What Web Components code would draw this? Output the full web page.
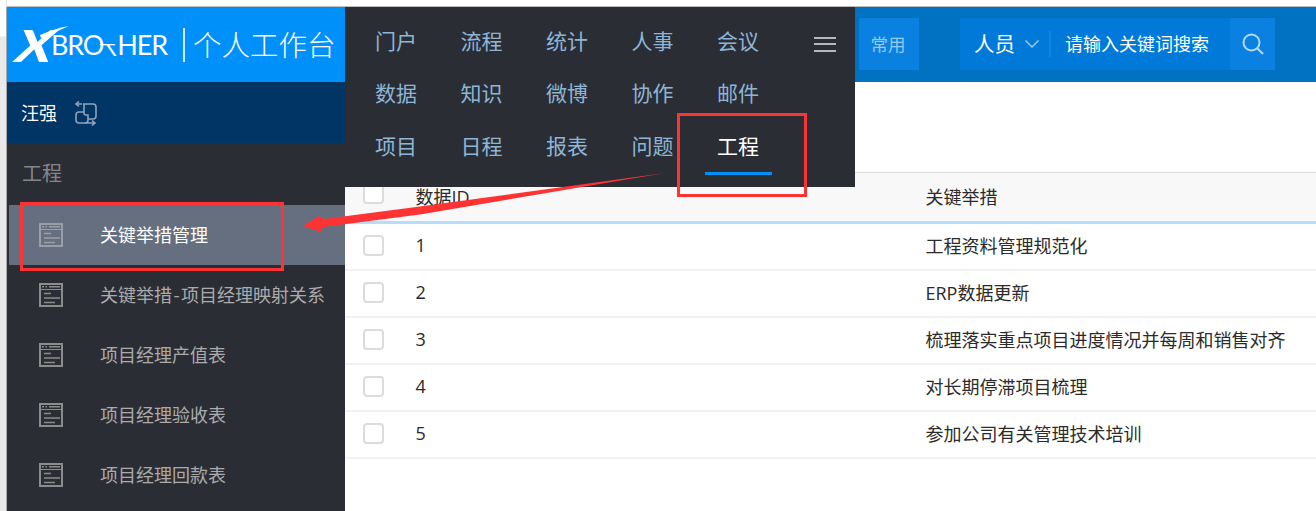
<!DOCTYPE html>
<html lang="zh">
<head>
<meta charset="utf-8">
<title>个人工作台</title>
<style>
    html, body {
        margin: 0;
        padding: 0;
        height: 511px;
        overflow: hidden;
        background: #fff;
        font-family: "Open Sans", "Noto Sans CJK SC", sans-serif;
    }
</style>
</head>
<body>
<app-shell>
    <side-bar slot="side">
        <side-item active>关键举措管理</side-item>
        <side-item>关键举措<span style="padding:0 1.4px">-</span>项目经理映射关系</side-item>
        <side-item>项目经理产值表</side-item>
        <side-item>项目经理验收表</side-item>
        <side-item>项目经理回款表</side-item>
    </side-bar>
    <top-bar slot="top"></top-bar>
    <data-table slot="main">
        <table-row head num="数据ID">关键举措</table-row>
        <table-row num="1">工程资料管理规范化</table-row>
        <table-row num="2">ERP数据更新</table-row>
        <table-row num="3">梳理落实重点项目进度情况并每周和销售对齐</table-row>
        <table-row num="4">对长期停滞项目梳理</table-row>
        <table-row num="5">参加公司有关管理技术培训</table-row>
    </data-table>
</app-shell>
<mark-layer></mark-layer>

<script>
class AppShell extends HTMLElement {
    constructor() {
        super()
        this.shadowDOM = this.attachShadow({mode: "open"})
    }

    connectedCallback() {
        this.shadowDOM.innerHTML = `
            <style>
                :host {
                    display: grid;
                    grid-template-columns: 7px 1fr;
                    grid-template-rows: 7px 504px;
                    width: 1316px;
                    height: 511px;
                }
                .corner { background: #fff; }
                .top-line {
                    background: #fff;
                    border-bottom: 1px solid #bdbdbd;
                    box-sizing: border-box;
                }
                .gutter {
                    background: linear-gradient(#fff 0, #fff 29px, #f3f3f3 29px, #f3f3f3 30px, #e9e9e9 30px);
                    border-right: 1px solid #a8a8a8;
                    box-sizing: border-box;
                }
                .corner { border-right: 1px solid #e4e4e4; box-sizing: border-box; }
                .work {
                    display: grid;
                    grid-template-columns: 338px 1fr;
                    overflow: hidden;
                    min-width: 0;
                }
                .right {
                    display: flex;
                    flex-direction: column;
                    min-width: 0;
                }
            </style>
            <div class="corner"></div>
            <div class="top-line"></div>
            <div class="gutter"></div>
            <div class="work">
                <slot name="side"></slot>
                <div class="right">
                    <slot name="top"></slot>
                    <slot name="main"></slot>
                </div>
            </div>
        `;
    }
}

class SideBar extends HTMLElement {
    constructor() {
        super()
        this.shadowDOM = this.attachShadow({mode: "open"})
    }

    connectedCallback() {
        this.shadowDOM.innerHTML = `
            <style>
                :host {
                    display: block;
                    background: #2b2d35;
                    height: 504px;
                    overflow: hidden;
                }
                .logo {
                    display: flex;
                    align-items: center;
                    height: 75px;
                    padding-left: 8px;
                    background: #0090fa;
                    color: #fff;
                }
                .brand {
                    position: relative;
                    display: flex;
                    align-items: center;
                    width: 168px;
                    height: 40px;
                    font-family: Lato, sans-serif;
                    font-weight: 400;
                    font-size: 27px;
                    letter-spacing: -1.2px;
                    white-space: nowrap;
                }
                .brand .x {
                    display: inline-block;
                    width: 33px;
                    margin-left: 3px;
                    font-size: 44px;
                    font-weight: 900;
                    line-height: 40px;
                    letter-spacing: 0;
                    transform-origin: left center;
                    transform: scaleX(1.2) skewX(-16deg);
                }
                .brand .t {
                    display: inline-block;
                    font-size: 26px;
                    transform: translateY(4px) scaleY(.65) skewX(24deg);
                }
                .brand svg {
                    position: absolute;
                    left: 24px;
                    top: 0;
                }
                .sep {
                    width: 2px;
                    height: 34px;
                    background: #cfe9fe;
                }
                .title {
                    margin: -2px 0 0 8px;
                    font-size: 28.5px;
                    font-weight: 300;
                    line-height: 40px;
                    white-space: nowrap;
                    font-family: "Noto Sans CJK SC", sans-serif;
                }
                .user {
                    display: flex;
                    align-items: center;
                    height: 61px;
                    padding-left: 14px;
                    background: #003566;
                    color: #fff;
                    font-size: 18px;
                    font-family: "Noto Sans CJK SC", sans-serif;
                }
                .user span { margin-top: -2px; }
                .user svg { margin-left: 18px; margin-top: 2px; }
                .group {
                    display: flex;
                    align-items: center;
                    height: 62px;
                    padding: 0 0 4px 15px;
                    color: #85868b;
                    font-size: 20px;
                    font-family: "Noto Sans CJK SC", sans-serif;
                    box-sizing: border-box;
                }
            </style>
            <div class="logo">
                <div class="brand">
                    <svg width="30" height="14" viewBox="0 0 30 14"><path d="M2 13 Q14 8 30 1 Q18 3 1 10Z" fill="#fff"/></svg>
                    <span class="x">X</span><span>BRO</span><span class="t">T</span><span>HER</span>
                </div>
                <div class="sep"></div>
                <div class="title">个人工作台</div>
            </div>
            <div class="user">
                <span>汪强</span>
                <svg width="22" height="25" viewBox="0 0 22 25" fill="none" stroke="#8fa3ba" stroke-width="1.6">
                    <path d="M8 3h10q3 0 3 3v9q0 3-3 3h-5"/>
                    <path d="M9 3v9q0 2 2 2h2v5q0 3-3 3H4q-3 0-3-3v-5q0-3 3-3h5"/>
                    <path d="M4 0.5 1 3l3 2.5M7 3H2"/>
                    <path d="M17 19.5l3 2.5-3 2.5M10 22h9"/>
                </svg>
            </div>
            <div class="group">工程</div>
            <slot></slot>
        `;
    }
}

class SideItem extends HTMLElement {
    constructor() {
        super()
        this.shadowDOM = this.attachShadow({mode: "open"})
    }

    connectedCallback() {
        this.shadowDOM.innerHTML = `
            <style>
                :host {
                    display: flex;
                    align-items: center;
                    height: 60px;
                    margin-left: 2px;
                    padding-left: 30px;
                    color: #ababab;
                    font-size: 18px;
                    white-space: nowrap;
                    font-family: "Noto Sans CJK SC", sans-serif;
                }
                :host([active]) {
                    background: #666f80;
                    color: #fff;
                }
                svg {
                    flex: none;
                    margin-right: 37px;
                    stroke: #8c8c8c;
                }
                :host([active]) svg { stroke: #9a9ea6; }
                .label { margin-top: -2px; }
            </style>
            <svg width="24" height="24" viewBox="0 0 24 24" fill="none" stroke-width="2">
                <rect x="1" y="1" width="22" height="22"/>
                <path d="M1 6.5h22" stroke-width="1"/>
                <path d="M3 3.8h2M6.5 3.8h1.5M10 3.8h11" stroke-width="1.6"/>
                <path d="M5 10.5h7M5 15h16M5 19.5h11" stroke-width="1.6"/>
            </svg>
            <span class="label"><slot></slot></span>
        `;
    }
}

class TopBar extends HTMLElement {
    constructor() {
        super()
        this.shadowDOM = this.attachShadow({mode: "open"})
    }

    connectedCallback() {
        this.shadowDOM.innerHTML = `
            <style>
                :host {
                    display: flex;
                    align-items: flex-start;
                    height: 75px;
                    background: #0072c1;
                    flex: none;
                    font-family: "Noto Sans CJK SC", sans-serif;
                }
                .spacer {
                    position: relative;
                    width: 510px;
                    height: 75px;
                    flex: none;
                }
                .common {
                    display: flex;
                    align-items: center;
                    justify-content: center;
                    box-sizing: border-box;
                    width: 60px;
                    height: 52px;
                    margin: 11px 0 0 4px;
                    padding: 0 2px 2px 0;
                    background: #0a80e0;
                    color: #93cbf5;
                    font-size: 17.5px;
                }
                search-box { margin: 11px 0 0 41px; }
            </style>
            <div class="spacer"><menu-panel></menu-panel></div>
            <div class="common">常用</div>
            <search-box></search-box>
        `;
    }
}

class MenuPanel extends HTMLElement {
    constructor() {
        super()
        this.shadowDOM = this.attachShadow({mode: "open"})
    }

    connectedCallback() {
        const names = ["门户", "流程", "统计", "人事", "会议", "数据", "知识", "微博", "协作", "邮件", "项目", "日程", "报表", "问题", "工程"];
        const items = names.map(n => `<div class="item${n === "工程" ? " on" : ""}">${n}</div>`).join("");
        this.shadowDOM.innerHTML = `
            <style>
                :host {
                    position: absolute;
                    left: 0;
                    top: 0;
                    z-index: 5;
                    display: block;
                    width: 510px;
                    height: 180px;
                    box-sizing: border-box;
                    padding: 7.5px 0 0 8.25px;
                    background: #2b2d35;
                }
                .grid {
                    display: grid;
                    grid-template-columns: repeat(5, 85.5px);
                    grid-auto-rows: 52.5px;
                }
                .item {
                    position: relative;
                    display: flex;
                    align-items: center;
                    justify-content: center;
                    padding-bottom: 2px;
                    box-sizing: border-box;
                    color: #8db6d6;
                    font-size: 21px;
                }
                .on { color: #fff; }
                .on::after {
                    content: "";
                    position: absolute;
                    left: 9.5px;
                    top: 52.5px;
                    width: 67px;
                    height: 3px;
                    background: #0090fa;
                }
                .burger {
                    position: absolute;
                    left: 469px;
                    top: 30px;
                    width: 22px;
                    height: 15px;
                    background: linear-gradient(#b4b7bc 0 2px, transparent 2px 6.5px, #b4b7bc 6.5px 8.5px, transparent 8.5px 13px, #b4b7bc 13px 15px);
                }
            </style>
            <div class="grid">${items}</div>
            <div class="burger"></div>
        `;
    }
}

class SearchBox extends HTMLElement {
    constructor() {
        super()
        this.shadowDOM = this.attachShadow({mode: "open"})
    }

    connectedCallback() {
        this.shadowDOM.innerHTML = `
            <style>
                :host {
                    display: flex;
                    align-items: stretch;
                    height: 52px;
                    color: #fff;
                }
                .field {
                    display: flex;
                    align-items: center;
                    width: 270px;
                    padding-left: 14px;
                    box-sizing: border-box;
                    background: #0079d8;
                    white-space: nowrap;
                }
                .kind { font-size: 20.5px; margin-top: -2px; }
                .chev { margin-left: 10px; }
                .div {
                    width: 2px;
                    height: 26px;
                    margin: 0 14px 0 10px;
                    background: #0a86ea;
                }
                .hint { font-size: 18px; margin-top: -2px; }
                .btn {
                    display: flex;
                    align-items: center;
                    justify-content: center;
                    width: 45px;
                    background: #0a80e0;
                }
            </style>
            <div class="field">
                <span class="kind">人员</span>
                <svg class="chev" width="14" height="8" viewBox="0 0 14 8" fill="none" stroke="#9fd0f6" stroke-width="1.4"><path d="M0.5 0.5 7 7l6.5-6.5"/></svg>
                <div class="div"></div>
                <span class="hint">请输入关键词搜索</span>
            </div>
            <div class="btn">
                <svg width="22" height="22" viewBox="0 0 22 22" fill="none" stroke="#b3dbf9" stroke-width="2"><circle cx="9.5" cy="9.5" r="8"/><path d="M15.5 15.5 21 21"/></svg>
            </div>
        `;
    }
}

class DataTable extends HTMLElement {
    constructor() {
        super()
        this.shadowDOM = this.attachShadow({mode: "open"})
    }

    connectedCallback() {
        this.shadowDOM.innerHTML = `
            <style>
                :host {
                    display: block;
                    flex: 1;
                    padding-top: 90px;
                    background: #fff;
                    color: #333;
                    font-size: 18px;
                }
            </style>
            <slot></slot>
        `;
    }
}

class TableRow extends HTMLElement {
    constructor() {
        super()
        this.shadowDOM = this.attachShadow({mode: "open"})
    }

    connectedCallback() {
        this.shadowDOM.innerHTML = `
            <style>
                :host {
                    display: grid;
                    grid-template-columns: 52.5px 510px 1fr;
                    align-items: center;
                    box-sizing: border-box;
                    height: 47px;
                    padding-left: 18px;
                    border-bottom: 2px solid #f2f2f2;
                    white-space: nowrap;
                    font-family: "Open Sans", "Noto Sans CJK SC", sans-serif;
                }
                :host([head]) {
                    height: 52px;
                    background: #f8f8f8;
                    border-top: 1px solid #dcdcdc;
                    border-bottom: 3px solid #b5dcf9;
                }
                .box {
                    width: 21px;
                    height: 21px;
                    box-sizing: border-box;
                    border: 2px solid #dcdcdc;
                    border-radius: 4px;
                    background: #fff;
                    margin-top: -2px;
                }
                :host([head]) .box { margin-top: -8px; }
                .cell { margin-top: -3px; color: #2b2b2b; }
                :host([head]) .cell { margin-top: -2px; }
            </style>
            <div class="box"></div>
            <div class="cell">${this.getAttribute("num")}</div>
            <div class="cell"><slot></slot></div>
        `;
    }
}

class MarkLayer extends HTMLElement {
    constructor() {
        super()
        this.shadowDOM = this.attachShadow({mode: "open"})
    }

    connectedCallback() {
        this.shadowDOM.innerHTML = `
            <style>
                :host {
                    position: absolute;
                    left: 0;
                    top: 0;
                    z-index: 10;
                    display: block;
                    width: 1316px;
                    height: 511px;
                    pointer-events: none;
                }
            </style>
            <svg width="1316" height="511" viewBox="0 0 1316 511" fill="none">
                <rect x="21.5" y="203.5" width="261" height="66" stroke="#ff3333" stroke-width="3"/>
                <rect x="678.5" y="114.5" width="127" height="81" stroke="#ff3333" stroke-width="3"/>
                <polygon points="665,173 420,206.5 324,219 319,216 303,226 321,232 323,227 420,214.5" fill="#ff3333"/>
            </svg>
        `;
    }
}

customElements.define('app-shell', AppShell);
customElements.define('side-bar', SideBar);
customElements.define('side-item', SideItem);
customElements.define('top-bar', TopBar);
customElements.define('menu-panel', MenuPanel);
customElements.define('search-box', SearchBox);
customElements.define('data-table', DataTable);
customElements.define('table-row', TableRow);
customElements.define('mark-layer', MarkLayer);
</script>
</body>
</html>
